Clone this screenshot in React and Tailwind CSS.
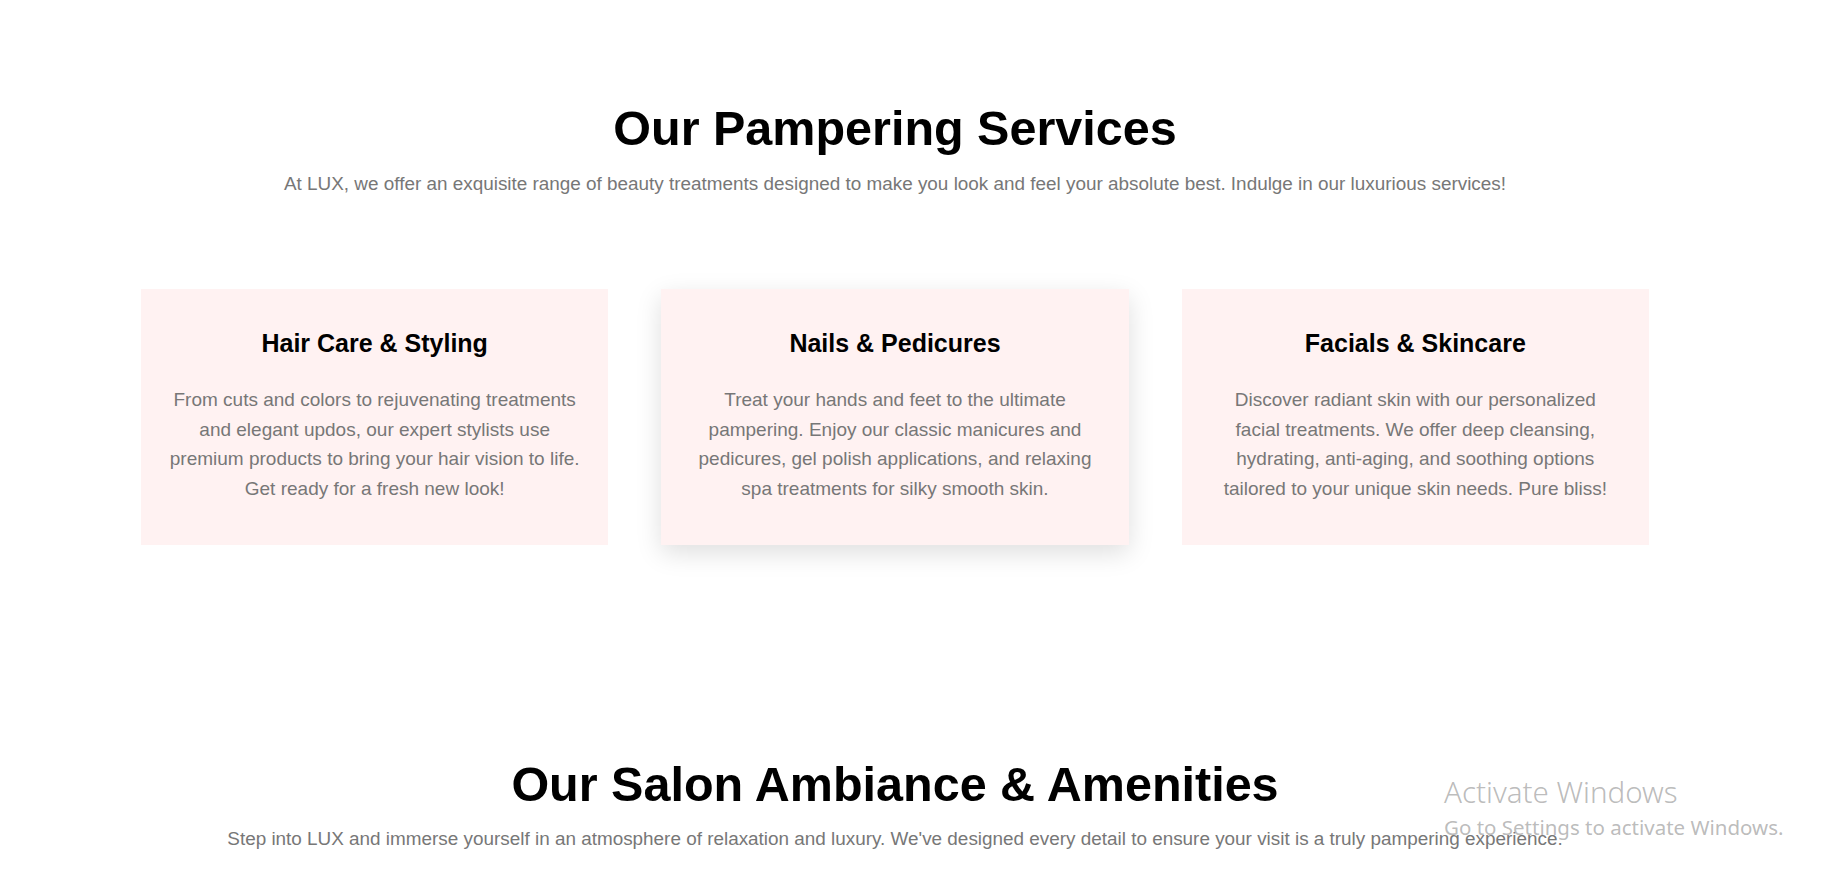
import React from "react";

const cards = [
  {
    title: "Hair Care & Styling",
    text: "From cuts and colors to rejuvenating treatments and elegant updos, our expert stylists use premium products to bring your hair vision to life. Get ready for a fresh new look!",
    shadow: false,
  },
  {
    title: "Nails & Pedicures",
    text: "Treat your hands and feet to the ultimate pampering. Enjoy our classic manicures and pedicures, gel polish applications, and relaxing spa treatments for silky smooth skin.",
    shadow: true,
  },
  {
    title: "Facials & Skincare",
    text: "Discover radiant skin with our personalized facial treatments. We offer deep cleansing, hydrating, anti-aging, and soothing options tailored to your unique skin needs. Pure bliss!",
    shadow: false,
  },
];

function Card({ title, text, shadow }) {
  return (
    <div
      className={
        shadow
          ? "bg-[#fff2f2] px-[28.5px] pt-[40px] pb-[41px] text-center shadow-[0_8px_24px_rgba(0,0,0,0.13)]"
          : "bg-[#fff2f2] px-[28.5px] pt-[40px] pb-[41px] text-center"
      }
    >
      <h3 className="text-[25px] leading-[29px] font-bold text-black">{title}</h3>
      <p className="mt-[27px] text-[19px] leading-[29.6px] text-[#777]">{text}</p>
    </div>
  );
}

export default function App() {
  return (
    <div className="relative h-[871px] w-full overflow-hidden bg-white font-['Liberation_Sans',Arial,sans-serif]">
      <div className="w-[1790px]">
        <section className="pt-[100px] text-center">
          <h2 className="text-[48.5px] leading-[57.6px] font-bold text-black">Our Pampering Services</h2>
          <p className="mt-[11px] text-[18.9px] leading-[29.6px] text-[#777]">
            At LUX, we offer an exquisite range of beauty treatments designed to make you look and feel your absolute best. Indulge in our luxurious services!
          </p>
          <div className="mx-auto mt-[91px] grid w-[1508px] grid-cols-3 gap-[53px]">
            {cards.map((c) => (
              <Card key={c.title} {...c} />
            ))}
          </div>
        </section>
        <section className="pt-[211px] text-center">
          <h2 className="text-[48.5px] leading-[57.6px] font-bold text-black">Our Salon Ambiance &amp; Amenities</h2>
          <p className="mt-[11px] text-[18.9px] leading-[29.6px] text-[#777]">
            Step into LUX and immerse yourself in an atmosphere of relaxation and luxury. We've designed every detail to ensure your visit is a truly pampering experience.
          </p>
        </section>
      </div>
      <div className="pointer-events-none absolute left-[1444px] top-[773px] font-['Segoe_UI','Noto_Sans',sans-serif] text-[rgba(150,150,150,0.65)]">
        <div className="text-[29.5px] leading-[38px] font-light">Activate Windows</div>
        <div className="mt-[2px] text-[20.5px] leading-[28px]">Go to Settings to activate Windows.</div>
      </div>
    </div>
  );
}
